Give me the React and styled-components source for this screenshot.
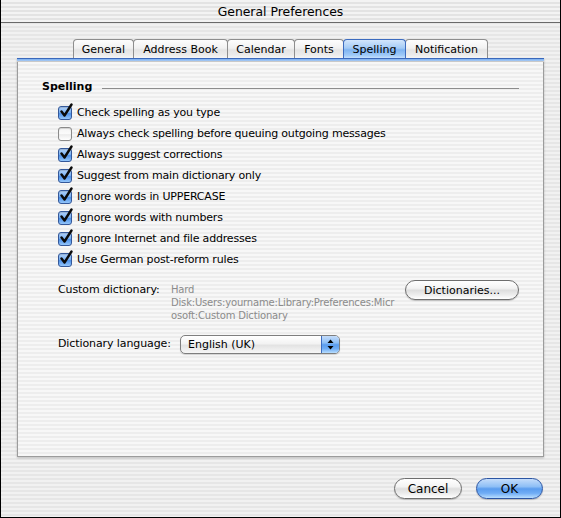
import React from "react";
import styled, { createGlobalStyle } from "styled-components";

const Global = createGlobalStyle`
  html, body { margin: 0; padding: 0; background: #fff; }
  body { font-family: "DejaVu Sans", "Lucida Grande", sans-serif; color: #000; }
`;

const stripes = (a, b) =>
  `repeating-linear-gradient(to bottom, ${a} 0px, ${a} 2px, ${b} 2px, ${b} 4px)`;

const Window = styled.div`
  width: 561px;
  height: 518px;
  box-sizing: border-box;
  border: 1px solid #000;
  border-top: none;
  background: ${stripes("#f1f1f1", "#e6e6e6")};
  display: flex;
  flex-direction: column;
  overflow: hidden;
`;

const TitleBar = styled.div`
  height: 22px;
  flex: none;
  border-bottom: 1px solid #6a6a6a;
  background: ${stripes("#f3f3f3", "#e3e3e3")};
  display: flex;
  align-items: center;
  justify-content: center;
  font-size: 12.4px;
  margin: 0 -1px;
`;

const Body = styled.div`
  flex: 1;
  display: flex;
  flex-direction: column;
  padding: 16px 16px 0 16px;
  min-height: 0;
`;

const TabRow = styled.div`
  display: flex;
  justify-content: center;
  height: 19px;
  flex: none;
  padding-left: 1px;
`;

const Tab = styled.div`
  width: ${(p) => p.$w}px;
  height: 19px;
  box-sizing: border-box;
  margin-left: -1px;
  border: 1px solid ${(p) => (p.$active ? "#3d6cbf" : "#8e8e8e")};
  border-bottom: none;
  border-radius: 4px 4px 0 0;
  display: flex;
  align-items: center;
  justify-content: center;
  font-size: 11px;
  padding-top: 1px;
  position: relative;
  z-index: ${(p) => (p.$active ? 2 : 1)};
  background: ${(p) =>
    p.$active
      ? "linear-gradient(#d3e6fc 0%, #a4cbf6 45%, #7fb4f1 55%, #9fcaf8 85%, #c5e0fd 100%)"
      : "linear-gradient(#fdfdfd 0%, #f1f1f1 45%, #e4e4e4 55%, #ececec 85%, #f6f6f6 100%)"};
`;

const Panel = styled.div`
  flex: 1;
  display: flex;
  flex-direction: column;
  border: 1px solid #9c9c9c;
  border-top: none;
  background: ${stripes("#f7f7f7", "#ededed")};
  box-shadow: 0 1px 2px rgba(0, 0, 0, 0.22);
`;

const PanelBar = styled.div`
  height: 4px;
  margin: 0 -1px;
  background: linear-gradient(#3a68bb 0%, #3a68bb 25%, #7aaeee 26%, #a9cbf5 75%, #c9c9c9 76%);
`;

const Content = styled.div`
  padding: 17px 24px 0 24px;
  display: flex;
  flex-direction: column;
`;

const GroupHead = styled.div`
  display: flex;
  align-items: center;
  height: 14px;
`;

const GroupTitle = styled.span`
  font-size: 11px;
  font-weight: bold;
`;

const Rule = styled.div`
  flex: 1;
  height: 1px;
  background: #8c8c8c;
  margin-left: 10px;
  margin-top: 5px;
`;

const CheckList = styled.div`
  margin: 9px 0 0 16px;
  display: flex;
  flex-direction: column;
`;

const CheckRow = styled.label`
  height: 21px;
  display: flex;
  align-items: center;
  font-size: 11px;
  letter-spacing: -0.18px;
`;

const BoxWrap = styled.span`
  position: relative;
  width: 14px;
  height: 14px;
  margin-right: 5px;
  flex: none;
`;

const Box = styled.span`
  display: block;
  width: 14px;
  height: 14px;
  box-sizing: border-box;
  border-radius: 3px;
  border: 1px solid ${(p) => (p.$on ? "#34589a" : "#8a8a8a")};
  background: ${(p) =>
    p.$on
      ? "linear-gradient(#b2d3fb 0%, #7db3f3 45%, #4f92ea 55%, #94c6fa 100%)"
      : "linear-gradient(#f4f4f4 0%, #fbfbfb 50%, #ececec 55%, #ffffff 100%)"};
  box-shadow: inset 0 1px 1px rgba(0, 0, 0, 0.15);
`;

const Tick = styled.svg`
  position: absolute;
  left: 1px;
  top: -3px;
  width: 14px;
  height: 15px;
`;

const DictRow = styled.div`
  display: flex;
  align-items: flex-start;
  margin: 10px 0 0 16px;
`;

const FieldLabel = styled.div`
  width: ${(p) => p.$w}px;
  flex: none;
  font-size: 11px;
  line-height: 20px;
  letter-spacing: -0.1px;
`;

const PathText = styled.div`
  flex: 1;
  font-size: 10px;
  line-height: 13px;
  letter-spacing: -0.18px;
  color: #8b8b8b;
  padding-top: 3px;
`;

const PushButton = styled.button`
  width: ${(p) => p.$w}px;
  height: ${(p) => p.$h}px;
  flex: none;
  border-radius: 11px;
  border: 1px solid ${(p) => (p.$default ? "#2c55a3" : "#6e6e6e")};
  font-family: "DejaVu Sans", sans-serif;
  font-size: ${(p) => p.$fs}px;
  color: #000;
  padding: 0;
  background: ${(p) =>
    p.$default
      ? "linear-gradient(#c4dcfa 0%, #8ebff6 40%, #5a9cee 52%, #70adf5 75%, #b9defe 100%)"
      : "linear-gradient(#ffffff 0%, #f3f3f3 40%, #dedede 52%, #ececec 75%, #ffffff 100%)"};
  box-shadow: 0 1px 1px rgba(0, 0, 0, 0.2);
`;

const LangRow = styled.div`
  display: flex;
  align-items: center;
  margin: 12px 0 0 16px;
`;

const Popup = styled.div`
  width: 160px;
  height: 19px;
  box-sizing: border-box;
  border: 1px solid #7e7e7e;
  border-radius: 5px;
  display: flex;
  overflow: hidden;
  background: linear-gradient(#ffffff 0%, #f3f3f3 45%, #e3e3e3 55%, #f7f7f7 100%);
  box-shadow: 0 1px 1px rgba(0, 0, 0, 0.15);
`;

const PopupText = styled.div`
  flex: 1;
  font-size: 11px;
  line-height: 17px;
  padding-left: 7px;
`;

const PopupArrows = styled.div`
  width: 17px;
  border-left: 1px solid #3d6cbf;
  display: flex;
  align-items: center;
  justify-content: center;
  background: linear-gradient(#c4dcfa 0%, #8ebff6 40%, #5a9cee 52%, #70adf5 75%, #b9defe 100%);
`;

const Footer = styled.div`
  flex: none;
  display: flex;
  justify-content: flex-end;
  gap: 14px;
  padding: 21px 1px 18px 0;
`;

const checks = [
  ["Check spelling as you type", true],
  ["Always check spelling before queuing outgoing messages", false],
  ["Always suggest corrections", true],
  ["Suggest from main dictionary only", true],
  ["Ignore words in UPPERCASE", true],
  ["Ignore words with numbers", true],
  ["Ignore Internet and file addresses", true],
  ["Use German post-reform rules", true],
];

const tabs = [
  ["General", 61],
  ["Address Book", 95],
  ["Calendar", 68],
  ["Fonts", 50],
  ["Spelling", 63, true],
  ["Notification", 83],
];

function Checkbox({ on }) {
  return (
    <BoxWrap>
      <Box $on={on} />
      {on && (
        <Tick viewBox="0 0 14 15">
          <path
            d="M2.5 8.5 L5.5 12.5 L12.5 1.5"
            fill="none"
            stroke="#0a0a0a"
            strokeWidth="2.4"
            strokeLinecap="round"
            strokeLinejoin="round"
          />
        </Tick>
      )}
    </BoxWrap>
  );
}

export default function App() {
  return (
    <>
      <Global />
      <Window>
        <TitleBar>General Preferences</TitleBar>
        <Body>
          <TabRow>
            {tabs.map(([t, w, a]) => (
              <Tab key={t} $w={w} $active={a}>
                {t}
              </Tab>
            ))}
          </TabRow>
          <Panel>
            <PanelBar />
            <Content>
              <GroupHead>
                <GroupTitle>Spelling</GroupTitle>
                <Rule />
              </GroupHead>
              <CheckList>
                {checks.map(([t, on]) => (
                  <CheckRow key={t}>
                    <Checkbox on={on} />
                    {t}
                  </CheckRow>
                ))}
              </CheckList>
              <DictRow>
                <FieldLabel $w={113}>Custom dictionary:</FieldLabel>
                <PathText>
                  Hard
                  <br />
                  Disk:Users:yourname:Library:Preferences:Micr
                  <br />
                  osoft:Custom Dictionary
                </PathText>
                <PushButton $w={114} $h={20} $fs={11}>
                  Dictionaries...
                </PushButton>
              </DictRow>
              <LangRow>
                <FieldLabel $w={122}>Dictionary language:</FieldLabel>
                <Popup>
                  <PopupText>English (UK)</PopupText>
                  <PopupArrows>
                    <svg width="7" height="11" viewBox="0 0 7 11">
                      <path d="M3.5 0.5 L6.5 4 L0.5 4 Z" fill="#000" />
                      <path d="M3.5 10.5 L6.5 7 L0.5 7 Z" fill="#000" />
                    </svg>
                  </PopupArrows>
                </Popup>
              </LangRow>
            </Content>
          </Panel>
          <Footer>
            <PushButton $w={68} $h={21} $fs={12}>
              Cancel
            </PushButton>
            <PushButton $w={67} $h={21} $fs={12} $default>
              OK
            </PushButton>
          </Footer>
        </Body>
      </Window>
    </>
  );
}
